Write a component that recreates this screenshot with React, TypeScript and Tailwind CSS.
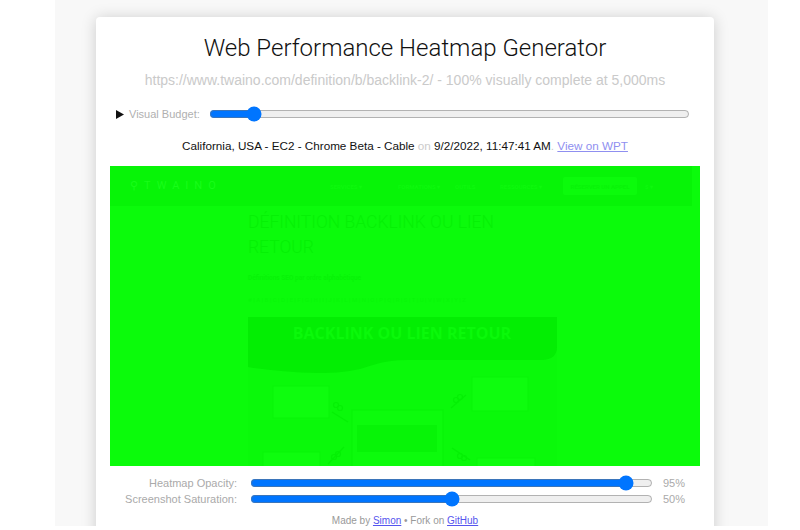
import React from "react";

// Faint illustration at the bottom of the captured page (article hero image)
function HeroImage() {
  return (
    <svg width="309" height="150" viewBox="0 0 309 150" className="block">
      <rect x="0" y="0" width="309" height="150" fill="#0af90a" />
      <path
        d="M0 0 H309 V30 Q309 42 295 43 L160 43 Q140 43 125 48 Q100 57 70 56 Q30 55 0 50 Z"
        fill="#03ee03"
      />
      <text
        x="154"
        y="22"
        textAnchor="middle"
        fontFamily="'Open Sans', sans-serif"
        fontWeight="700"
        fontSize="16"
        fill="#0af90a"
      >
        BACKLINK OU LIEN RETOUR
      </text>
      {/* content cards */}
      <rect x="25" y="69" width="56" height="32" fill="#0efd0e" stroke="#08f508" />
      <rect x="224" y="60" width="56" height="34" fill="#0efd0e" stroke="#08f508" />
      <rect x="104" y="93" width="91" height="60" fill="#0cfb0c" stroke="#07f307" />
      <rect x="109" y="108" width="80" height="27" fill="#07f407" />
      <rect x="15" y="135" width="57" height="20" fill="#0efd0e" stroke="#08f508" />
      <rect x="229" y="141" width="58" height="14" fill="#0efd0e" stroke="#08f508" />
      {/* chain links */}
      <g fill="none" stroke="#05f005" strokeWidth="1.2">
        <circle cx="88" cy="88" r="2.5" />
        <circle cx="92" cy="91" r="2.5" />
        <path d="M84 95 L100 105" />
        <circle cx="86" cy="140" r="2.5" />
        <circle cx="90" cy="137" r="2.5" />
        <path d="M80 147 L96 130" />
        <circle cx="208" cy="83" r="2.5" />
        <circle cx="212" cy="80" r="2.5" />
        <path d="M203 91 L218 78" />
        <circle cx="212" cy="139" r="2.5" />
        <circle cx="216" cy="141" r="2.5" />
        <path d="M204 131 L222 143" />
      </g>
    </svg>
  );
}

function CapturedPage() {
  return (
    <div className="h-[300px] bg-[#0bfb0b] overflow-hidden font-['Roboto',sans-serif]">
      {/* site header */}
      <div className="w-[582px] h-[40px] bg-[#07f407] flex items-center pl-[20px]">
        <span className="text-[11px] tracking-[6px] text-[#18fd18] w-[200px]">⚲TWAINO</span>
        <div className="flex items-center text-[6px] font-bold text-[#0df90d]">
          <span className="w-[68px]">SERVICES ▾</span>
          <span className="w-[57px]">FORMATIONS ▾</span>
          <span className="w-[45px]">OUTILS</span>
          <span className="w-[63px]">RESSOURCES ▾</span>
          <span className="w-[74px] h-[18px] bg-[#0bfb0b] rounded-[2px] flex items-center justify-center text-[#08f408]">
            RÉSERVER UN APPEL
          </span>
          <span className="ml-[8px]">$ ▾</span>
        </div>
      </div>
      {/* article */}
      <div className="pl-[138px]">
        <div className="mt-[4px] text-[17.5px] leading-[25px] font-light text-[#05f105]">
          DÉFINITION BACKLINK OU LIEN
          <br />
          RETOUR
        </div>
        <div className="mt-[13px] text-[6.5px] leading-[10px] font-bold text-[#07f307]">
          Définitions SEO par ordre alphabétique
        </div>
        <div className="mt-[12px] text-[6px] leading-[10px] text-[#08f608]">
          # | A | B | C | D | E | F | G | H | I | J | K | L | M | N | O | P | Q | R | S | T | U | V | W | X | Y | Z
        </div>
        <div className="mt-[12px]">
          <HeroImage />
        </div>
      </div>
    </div>
  );
}

function SliderRow({ label, value }: { label: string; value: number }) {
  return (
    <div className="flex items-center h-[16px]">
      <span className="w-[127px] text-right text-[11px] text-[#aaa]">{label}</span>
      <input
        type="range"
        min={0}
        max={100}
        defaultValue={value}
        className="ml-[13px] w-[403px]"
      />
      <span className="ml-[10px] text-[11px] text-[#aaa]">{value}%</span>
    </div>
  );
}

export default function App() {
  return (
    <div className="bg-white h-[530px] font-['Liberation_Sans',Arial,sans-serif]">
      <div className="ml-[55px] w-[713px] h-[526px] bg-[#f8f8f8] overflow-hidden pt-[17px] pl-[41px]">
        <div className="w-[618px] h-[540px] bg-white rounded-[4px] shadow-[0_1px_15px_rgba(0,0,0,0.18)] px-[14px] flex flex-col">
          <h1 className="mt-[17px] text-[24px] leading-[28px] font-light font-['Roboto',sans-serif] text-[#111] text-center">
            Web Performance Heatmap Generator
          </h1>
          <p className="mt-[8px] text-[14px] leading-[20px] text-[#cacaca] text-center">
            https://www.twaino.com/definition/b/backlink-2/ - 100% visually complete at 5,000ms
          </p>
          <div className="mt-[14px] h-[20px] flex items-center pl-[6px] pr-[10px]">
            <svg width="8" height="9" viewBox="0 0 8 9" className="shrink-0">
              <path d="M0 0 L8 4.5 L0 9 Z" fill="#111" />
            </svg>
            <span className="ml-[5px] text-[11px] text-[#b0b0b0]">Visual Budget:</span>
            <input type="range" min={0} max={1000} defaultValue={80} className="ml-[9px] flex-1" />
          </div>
          <div className="mt-[14px] text-[11.7px] leading-[16px] text-center text-[#111]">
            California, USA - EC2 - Chrome Beta - Cable <span className="text-[#ccc]">on</span>{" "}
            9/2/2022, 11:47:41 AM<span className="text-[#ccc]">.</span>{" "}
            <a href="#" className="text-[#8f8ff0] underline">View on WPT</a>
          </div>
          <div className="mt-[12px]">
            <CapturedPage />
          </div>
          <div className="mt-[9px]">
            <SliderRow label="Heatmap Opacity:" value={95} />
          </div>
          <SliderRow label="Screenshot Saturation:" value={50} />
          <div className="mt-[7px] text-[10px] leading-[14px] text-center text-[#999]">
            Made by <a href="#" className="text-[#5555ee] underline">Simon</a> • Fork on{" "}
            <a href="#" className="text-[#5555ee] underline">GitHub</a>
          </div>
        </div>
      </div>
    </div>
  );
}
